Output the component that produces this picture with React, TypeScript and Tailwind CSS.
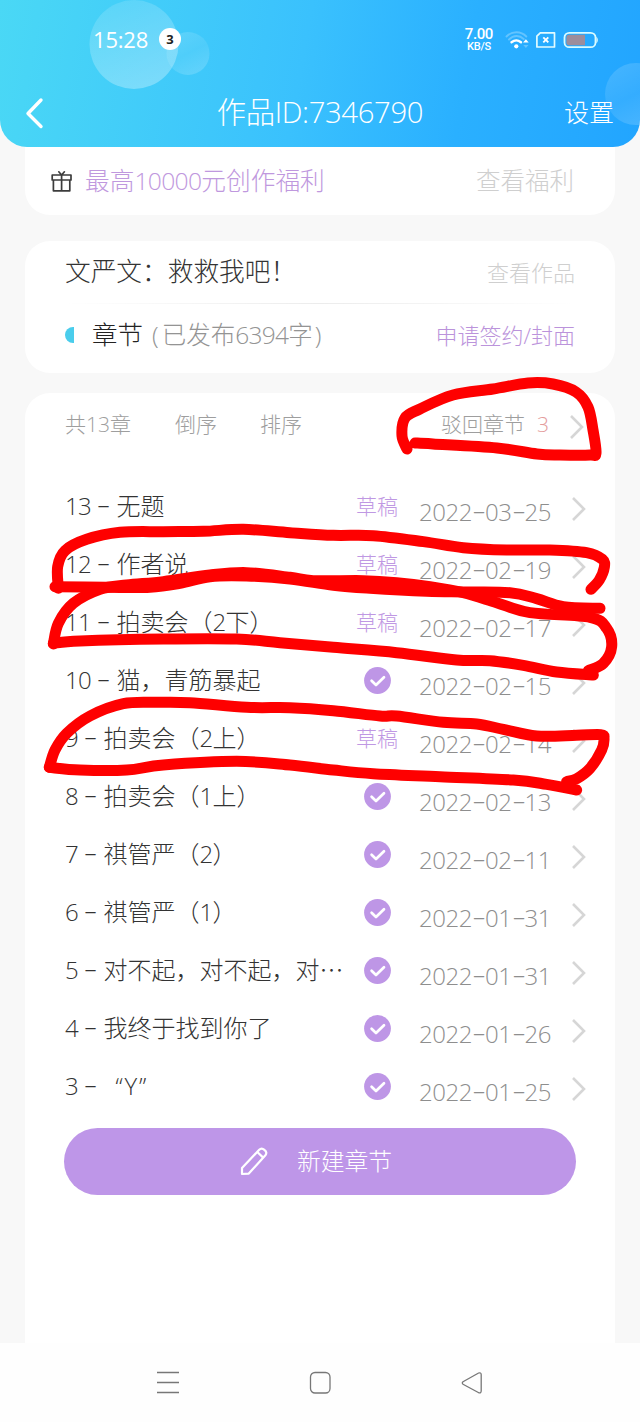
import type { ReactNode } from "react";

type Point = [number, number];

// Catmull-Rom spline through the given points, as an SVG path.
function smooth(points: Point[]): string {
  let d = `M${points[0][0]} ${points[0][1]}`;
  for (let i = 0; i < points.length - 1; i++) {
    const p0 = points[Math.max(i - 1, 0)];
    const p1 = points[i];
    const p2 = points[i + 1];
    const p3 = points[Math.min(i + 2, points.length - 1)];
    d += ` C${p1[0] + (p2[0] - p0[0]) / 6} ${p1[1] + (p2[1] - p0[1]) / 6} ${p2[0] - (p3[0] - p1[0]) / 6} ${p2[1] - (p3[1] - p1[1]) / 6} ${p2[0]} ${p2[1]}`;
  }
  return d;
}

const REJECTED_MARK: Point[] = [
  [407, 449], [402, 436], [405, 418], [420, 409], [453, 395], [493, 389], [528, 383], [553, 384],
  [576, 392], [588, 407], [593, 430], [596, 453], [590, 455], [560, 455], [537, 454], [497, 448], [433, 444], [415, 443],
];

// Pen strokes over the chapter list, in thirds of a pixel from (30, 480).
const LIST_MARKS: Point[][] = [
  [[85, 325], [83, 260], [105, 212], [170, 178], [270, 157], [400, 155], [520, 154], [640, 148], [780, 158], [910, 166], [1030, 167], [1180, 185], [1300, 203], [1430, 210], [1560, 210], [1670, 218], [1717, 238], [1723, 262], [1708, 300], [1683, 328]],
  [[75, 320], [230, 322], [360, 322], [450, 310], [540, 290], [650, 288], [780, 297], [910, 316], [1020, 325], [1190, 334], [1300, 336], [1440, 338], [1520, 356], [1600, 380], [1710, 385]],
  [[70, 492], [85, 430], [130, 370], [210, 328], [290, 315], [400, 305], [540, 285], [650, 278], [780, 292], [850, 302], [1000, 302], [1100, 308], [1200, 320], [1300, 338], [1400, 368], [1500, 398], [1680, 412], [1730, 445], [1745, 500], [1720, 550], [1675, 572]],
  [[70, 490], [150, 483], [400, 477], [620, 477], [750, 488], [910, 502], [1100, 518], [1280, 540], [1380, 542], [1480, 556], [1580, 576], [1690, 585]],
  [[58, 862], [75, 810], [110, 760], [180, 708], [280, 671], [380, 667], [480, 668], [650, 682], [780, 683], [910, 692], [1050, 708], [1100, 708], [1240, 727], [1340, 732], [1420, 748], [1520, 768], [1640, 766], [1712, 764], [1722, 775], [1715, 810], [1680, 865], [1640, 896], [1610, 905]],
  [[58, 862], [150, 870], [290, 870], [400, 855], [620, 844], [780, 855], [910, 870], [1030, 881], [1230, 890], [1450, 900], [1550, 913], [1640, 930]],
];

interface Chapter {
  no: number;
  title: ReactNode;
  date: string;
  draft?: boolean;
}

function Num({ children }: { children: ReactNode }) {
  return <span className="tracking-[-0.7px]">{children}</span>;
}

const CHAPTERS: Chapter[] = [
  { no: 13, title: "无题", date: "2022-03-25", draft: true },
  { no: 12, title: "作者说", date: "2022-02-19", draft: true },
  { no: 11, title: <>拍卖会（<Num>2</Num>下）</>, date: "2022-02-17", draft: true },
  { no: 10, title: "猫，青筋暴起", date: "2022-02-15" },
  { no: 9, title: <>拍卖会（<Num>2</Num>上）</>, date: "2022-02-14", draft: true },
  { no: 8, title: <>拍卖会（<Num>1</Num>上）</>, date: "2022-02-13" },
  { no: 7, title: <>祺管严（<Num>2</Num>）</>, date: "2022-02-11" },
  { no: 6, title: <>祺管严（<Num>1</Num>）</>, date: "2022-01-31" },
  { no: 5, title: "对不起，对不起，对⋯", date: "2022-01-31" },
  { no: 4, title: "我终于找到你了", date: "2022-01-26" },
  { no: 3, title: <span className="ml-[12px] tracking-[1.8px]">“Y”</span>, date: "2022-01-25" },
];

function Dash() {
  return <span className="inline-block w-[13px] -translate-y-[2px] scale-x-[1.75] text-center">-</span>;
}

function DateLabel({ date }: { date: string }) {
  const [year, month, day] = date.split("-");
  return (
    <span className="tracking-[-0.45px]">
      {year}
      <Dash />
      {month}
      <Dash />
      {day}
    </span>
  );
}

function Chevron() {
  return (
    <svg width="16" height="26" viewBox="0 0 16 26" fill="none" stroke="#d6d6d6" strokeWidth="2.6">
      <path d="M2 2 L13 13 L2 24" />
    </svg>
  );
}

function CheckBadge() {
  return (
    <svg width="27" height="27" viewBox="0 0 27 27" fill="none">
      <circle cx="13.5" cy="13.5" r="13.4" fill="#be96e6" />
      <path d="M7.6 13.8 L12 18 L20 10.2" stroke="#fff" strokeWidth="2.7" strokeLinecap="round" strokeLinejoin="round" />
    </svg>
  );
}

function StatusIcons() {
  return (
    <svg width="96" height="22" viewBox="0 0 96 22" fill="none">
      <g strokeWidth="1.9" strokeLinecap="round">
        <path d="M2.5 7.5 C8 1.8 17 1.8 22.3 7.5" stroke="#fff" strokeOpacity=".28" />
        <path d="M5 10.5 C9.5 6 15.5 6 19.7 10" stroke="#fff" strokeOpacity=".28" />
        <path d="M7.5 13.3 C10.5 10.9 14 10.9 17 13.2" stroke="#fff" strokeWidth="2.4" />
      </g>
      <circle cx="12.3" cy="17.3" r="2.1" fill="#fff" />
      <path d="M19.1 13.6 L21.9 10.2 L24.7 13.6 Z" fill="#fff" />
      <path d="M19.3 16 L21.9 19 L24.5 16 Z" fill="#fff" fillOpacity=".28" />
      <path d="M36.3 3.8 H50.5 V18 H32.9 V7.2 Z" stroke="#e2fbff" strokeWidth="1.7" strokeLinejoin="round" />
      <path d="M39.3 8.4 L44.3 13.4 M44.3 8.4 L39.3 13.4" stroke="#fff" strokeWidth="1.9" />
      <rect x="60.5" y="3.8" width="31" height="14.4" rx="4.8" stroke="#d9fbff" strokeWidth="1.8" />
      <path d="M65 5.8 H81 V16.2 H65 Q62.4 16.2 62.4 13.6 V8.4 Q62.4 5.8 65 5.8 Z" fill="#9c8d9c" />
      <path d="M92.4 7.5 Q95.4 11 92.4 14.5 Z" fill="#d9fbff" />
    </svg>
  );
}

function Header() {
  return (
    <header className="relative flex h-[147px] shrink-0 flex-col overflow-hidden rounded-b-[27px] bg-[linear-gradient(100deg,#4ad8f5_0%,#3ac1fd_47%,#2ab0ff_72%,#22a5ff_100%)]">
      <svg className="absolute inset-0" width="640" height="147" viewBox="0 0 640 147">
        <defs>
          <linearGradient id="bubble" x1="0.2" y1="0" x2="0.55" y2="1">
            <stop offset="0" stopColor="#fff" stopOpacity=".12" />
            <stop offset="1" stopColor="#fff" stopOpacity=".3" />
          </linearGradient>
          <linearGradient id="faint" x1="0" y1="0" x2="0.5" y2="1">
            <stop offset="0" stopColor="#fff" stopOpacity=".16" />
            <stop offset="0.6" stopColor="#fff" stopOpacity=".08" />
            <stop offset="1" stopColor="#fff" stopOpacity=".16" />
          </linearGradient>
        </defs>
        <circle cx="134" cy="44.5" r="44.5" fill="url(#bubble)" />
        <circle cx="188" cy="53.5" r="21.5" fill="url(#faint)" />
        <circle cx="636" cy="94" r="31" fill="url(#faint)" />
      </svg>
      <div className="relative flex h-[80px] items-center pr-[40px] pl-[93px]">
        <span className="-mt-[2px] w-[55px] text-[22px] leading-none font-normal tracking-[-0.2px]">15:28</span>
        <span className="-mt-[2px] ml-[11px] flex size-[22px] items-center justify-center rounded-full bg-white text-[13px] leading-none font-bold text-[#222]">
          3
        </span>
        <div className="ml-auto flex flex-col items-center gap-px font-['Roboto','Noto_Sans_CJK_SC',sans-serif] font-medium">
          <span className="text-[15px] leading-[11px] tracking-[-0.4px]">7.00</span>
          <span className="text-[11px] leading-[11px] tracking-[-0.3px]">KB/S</span>
        </div>
        <div className="ml-[11px] w-[96px]">
          <StatusIcons />
        </div>
      </div>
      <div className="relative grid h-[67px] grid-cols-[110px_1fr_110px] items-center">
        <svg className="-mt-[1px] ml-[25px]" width="20" height="32" viewBox="0 0 20 32" fill="none" stroke="#fff" strokeWidth="3.4" strokeLinecap="round">
          <path d="M16 3 L3 16.5 L16 29.5" strokeLinejoin="round" />
        </svg>
        <h1 className="-mt-[2px] text-center text-[29.3px] leading-none font-light tracking-[-0.35px]">作品ID:7346790</h1>
        <span className="-mt-[3px] pr-[26px] text-right text-[25px] leading-none font-light">设置</span>
      </div>
    </header>
  );
}

function GiftIcon() {
  return (
    <svg width="22" height="22" viewBox="0 0 22 22" fill="none" stroke="#3c3c3c" strokeWidth="1.7" strokeLinejoin="round" strokeLinecap="round">
      <path d="M1.2 5 H20 V10 H1.2 Z M2.4 10 V20.8 H18.8 V10 M10.6 5 V20.8 M7.8 1.8 L10.6 5 L13.4 1.8" />
    </svg>
  );
}

function ChapterRow({ chapter }: { chapter: Chapter }) {
  return (
    <li className="flex h-[58.05px] items-center pl-[40px]">
      <span className="w-[289px] text-[24px] leading-none whitespace-pre text-[#333]">
        <Num>{chapter.no}</Num> <Dash /> {chapter.title}
      </span>
      <span className="flex w-[46px] items-center justify-center text-[21px] leading-none text-[#bf98e3]">
        {chapter.draft ? "草稿" : <CheckBadge />}
      </span>
      <span className="ml-[19px] w-[152px] pt-[12px] text-[24px] leading-none whitespace-nowrap text-[#8e8e8e]">
        <DateLabel date={chapter.date} />
      </span>
      <span className="mt-[6px]">
        <Chevron />
      </span>
    </li>
  );
}

export default function App() {
  return (
    <div className="relative flex h-[1422px] w-[640px] flex-col overflow-hidden bg-[#f8f8f8] font-['Open_Sans','Noto_Sans_CJK_SC',sans-serif] font-light text-white">
      <Header />

      <main className="flex flex-1 flex-col px-[25px]">
        <section className="flex h-[68px] items-center rounded-b-[25px] bg-white pr-[41px] pl-[26px]">
          <GiftIcon />
          <span className="ml-[12px] text-[24.7px] leading-none text-[#bf98de]">
            最高<Num>10000</Num>元创作福利
          </span>
          <span className="ml-auto text-[24.5px] leading-none text-[#cfcfcf]">查看福利</span>
        </section>

        <section className="mt-[26px] flex h-[132px] flex-col rounded-[25px] bg-white px-[40px]">
          <div className="flex h-[62px] items-center justify-between">
            <span className="text-[25.7px] leading-none text-[#333]">文严文：救救我吧！</span>
            <span className="text-[22px] leading-none text-[#cfcfcf]">查看作品</span>
          </div>
          <div className="h-px bg-linear-to-r from-transparent via-[#ececec] to-transparent" />
          <div className="flex h-[62px] items-center">
            <span className="h-[16px] w-[9px] rounded-l-full bg-[#4acdec]" />
            <span className="ml-[18px] text-[25.5px] leading-none text-[#222]">章节</span>
            <span className="ml-[9px] text-[24.5px] leading-none text-[#949494]">
              <span className="tracking-[3px]">(</span>已发布<Num>6394</Num>
              <span className="tracking-[2px]">字</span>)
            </span>
            <span className="ml-auto text-[22px] leading-none text-[#bb93db]">申请签约/封面</span>
          </div>
        </section>

        <section className="mt-[20px] flex flex-1 flex-col rounded-t-[25px] bg-white">
          <div className="flex h-[62px] items-center pr-[30px] pl-[40px] text-[21px] leading-none text-[#9e9e9e]">
            <span className="w-[110px]">共13章</span>
            <span className="w-[85px]">倒序</span>
            <span>排序</span>
            <span className="ml-auto">驳回章节</span>
            <span className="ml-[12px] text-[#e49c9c]">3</span>
            <span className="mt-[5px] ml-[20px]">
              <Chevron />
            </span>
          </div>
          <ul className="mt-[22px] flex flex-col">
            {CHAPTERS.map((chapter) => (
              <ChapterRow key={chapter.no} chapter={chapter} />
            ))}
          </ul>
          <button className="mx-[39px] mt-[12px] flex h-[67px] shrink-0 items-center justify-center rounded-full bg-[#be96e8]">
            <svg width="28" height="30" viewBox="0 0 28 30" fill="none" stroke="#fff" strokeWidth="2.2" strokeLinejoin="round">
              <path d="M2 28 L2 22 L19.2 3.8 Q21.6 1.4 24.4 3.9 Q27.6 6.5 25.4 9.2 L8.8 27.6 Z M17.3 6 L23.2 11.6" />
            </svg>
            <span className="ml-[29px] pt-px pr-[8px] text-[23.8px] leading-none">新建章节</span>
          </button>
        </section>
      </main>

      <nav className="flex h-[79px] shrink-0 items-center justify-center gap-[130px] bg-[#fefefe]">
        <svg width="22" height="24" viewBox="0 0 22 24" stroke="#777" strokeWidth="1.3">
          <path d="M0 1.5 H22 M0 11.5 H22 M0 21.5 H22" />
        </svg>
        <svg width="22" height="24" viewBox="0 0 22 24" fill="none" stroke="#777" strokeWidth="1.3">
          <rect x="1.5" y="1.5" width="19.5" height="20.5" rx="4.5" />
        </svg>
        <svg width="22" height="24" viewBox="0 0 22 24" fill="none" stroke="#777" strokeWidth="1.3" strokeLinejoin="round">
          <path d="M2 10.8 L17.6 2 Q20 1.2 20.2 3.5 V20 Q20 22.5 17.8 21.8 L2 13.2 Q0.6 12 2 10.8 Z" />
        </svg>
      </nav>

      <svg className="pointer-events-none absolute inset-0" width="640" height="1422" viewBox="0 0 640 1422" fill="none" stroke="#fe0000" strokeLinecap="round" strokeLinejoin="round">
        <path d={smooth(REJECTED_MARK)} strokeWidth="11" />
        <g transform="translate(30 480) scale(0.33333)" strokeWidth="33">
          {LIST_MARKS.map((mark, i) => (
            <path key={i} d={smooth(mark)} />
          ))}
        </g>
      </svg>
    </div>
  );
}
